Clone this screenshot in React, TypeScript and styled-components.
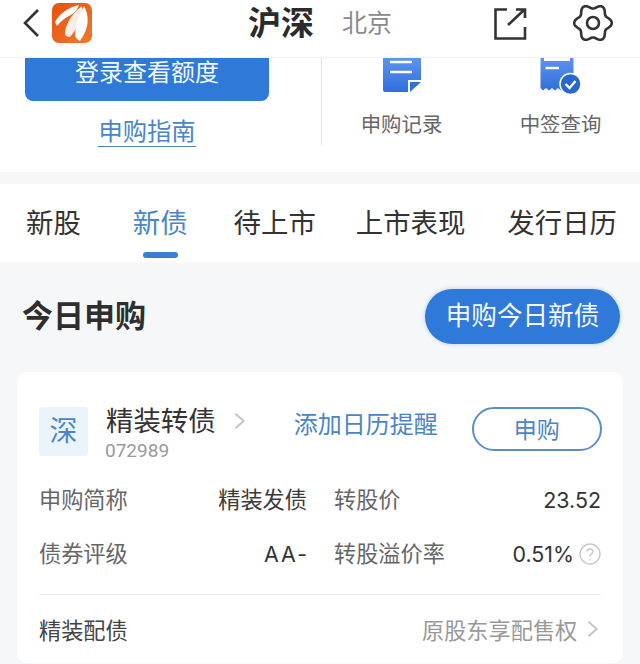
import { createGlobalStyle } from 'styled-components';
import styled from 'styled-components';

const GlobalStyle = createGlobalStyle`
  html, body {
    margin: 0;
    padding: 0;
    background: #f6f7f9;
    overflow: hidden;
  }
  body {
    font-family: "Roboto", "Noto Sans CJK SC", sans-serif;
  }
`;

// wavy six-lobed outline of the settings gear
const gearPath = () => {
  const points: string[] = [];
  for (let deg = 0; deg < 360; deg += 4) {
    const rad = (deg * Math.PI) / 180;
    const r = 16.6 + 2.2 * Math.cos(6 * rad);
    points.push(`${(20 + r * Math.cos(rad)).toFixed(2)} ${(20 + r * Math.sin(rad)).toFixed(2)}`);
  }
  return `M${points.join(' L')} Z`;
};

const Page = styled.div`
  width: 640px;
  height: 664px;
  overflow: hidden;
  display: flex;
  flex-direction: column;
`;

const Header = styled.header`
  height: 57px;
  flex: none;
  background: #fff;
  border-bottom: 1px solid #f1f1f1;
  display: flex;
  align-items: flex-start;
  padding-left: 22px;
`;

const BackIcon = styled.svg`
  width: 18px;
  height: 30px;
  margin-top: 8px;
  flex: none;
`;

const Logo = styled.svg`
  width: 40px;
  height: 40px;
  margin: 3px 0 0 12px;
  flex: none;
`;

const Title = styled.h1`
  margin: 0 0 0 156px;
  font-size: 33px;
  line-height: 48px;
  font-weight: 700;
  color: #2b2b2b;
  width: 94px;
  flex: none;
`;

const City = styled.span`
  font-size: 25px;
  line-height: 48px;
  color: #8a8a8a;
  width: 151px;
  flex: none;
`;

const ShareIcon = styled.svg`
  width: 34px;
  height: 34px;
  margin-top: 7px;
  flex: none;
`;

const GearIcon = styled.svg`
  width: 40px;
  height: 40px;
  margin: 3px 0 0 46px;
  flex: none;
`;

const Overview = styled.section`
  height: 114px;
  flex: none;
  background: #fff;
  display: flex;
`;

const LoginColumn = styled.div`
  width: 244px;
  margin-left: 25px;
  display: flex;
  flex-direction: column;
  align-items: center;
`;

const LoginButton = styled.div`
  width: 100%;
  height: 43px;
  background: #2f7ad9;
  border-radius: 0 0 8px 8px;
  color: #f4f8fd;
  font-size: 24px;
  line-height: 30px;
  text-align: center;
`;

const GuideLink = styled.a`
  margin-top: 15px;
  font-size: 24.3px;
  line-height: 32px;
  color: #4a86c5;
  border-bottom: 1px solid #4a86c5;
  height: 30px;
`;

const Divider = styled.div`
  width: 1px;
  height: 87px;
  margin-left: 52px;
  background: #e4e4e4;
`;

const Shortcut = styled.div`
  width: 159px;
  display: flex;
  flex-direction: column;
  align-items: center;
  font-size: 20.4px;
  line-height: 28px;
  color: #666;
`;

const ShortcutIcon = styled.svg`
  width: 48px;
  height: 36px;
  margin-bottom: 17px;
`;

const Gap = styled.div`
  height: 12px;
  flex: none;
  background: #f6f7f9;
`;

const Tabs = styled.nav`
  height: 78px;
  flex: none;
  background: #fff;
  display: flex;
  padding-left: 26px;
`;

const Tab = styled.div<{ $active?: boolean; $gap: number }>`
  position: relative;
  margin-right: ${(props) => props.$gap}px;
  font-size: 27.4px;
  line-height: 80px;
  color: ${(props) => (props.$active ? '#4a86c5' : '#333')};
  white-space: nowrap;

  ${(props) =>
    props.$active &&
    `
    &::after {
      content: '';
      position: absolute;
      left: 10px;
      right: 10px;
      bottom: 4px;
      height: 6px;
      border-radius: 3px;
      background: #3a7fd5;
    }
  `}
`;

const SectionHead = styled.div`
  height: 110px;
  flex: none;
  display: flex;
  align-items: center;
  justify-content: space-between;
  padding: 0 20px 1px 22px;
  box-sizing: border-box;
`;

const SectionTitle = styled.h2`
  margin: 0;
  font-size: 31px;
  line-height: 44px;
  font-weight: 700;
  color: #2e2e2e;
`;

const TodayButton = styled.div`
  width: 195px;
  height: 55px;
  border-radius: 28px;
  background: #2f7ad9;
  box-shadow: 0 0 4px rgba(47, 122, 217, 0.35);
  color: #f4f8fd;
  font-size: 25.6px;
  line-height: 55px;
  text-align: center;
`;

const Card = styled.section`
  margin: 0 17px;
  height: 291px;
  flex: none;
  box-sizing: border-box;
  background: #fff;
  border-radius: 10px;
  padding: 35px 22px 0;
`;

const CardHead = styled.div`
  display: flex;
  align-items: flex-start;
  height: 64px;
`;

const MarketBadge = styled.div`
  width: 49px;
  height: 49px;
  background: #ebf3fb;
  border-radius: 3px;
  color: #4a86c5;
  font-size: 28px;
  line-height: 49px;
  text-align: center;
  flex: none;
`;

const NameBlock = styled.div`
  margin-left: 18px;
  width: 128px;
  flex: none;
`;

const BondName = styled.div`
  font-size: 27.4px;
  line-height: 28px;
  margin-top: 1px;
  color: #333;
  white-space: nowrap;
`;

const BondCode = styled.div`
  font-size: 19px;
  line-height: 22px;
  margin: 4px 0 0 -1px;
  color: #999;
`;

const Chevron = styled.svg<{ $size: number }>`
  width: ${(props) => props.$size * 0.65}px;
  height: ${(props) => props.$size}px;
  flex: none;
`;

const NameChevron = styled(Chevron)`
  margin-top: 5px;
`;

const Reminder = styled.div`
  margin-left: 48px;
  font-size: 24px;
  line-height: 37px;
  color: #4a86c5;
  white-space: nowrap;
  width: 178px;
  flex: none;
`;

const ApplyButton = styled.div`
  width: 130px;
  height: 44px;
  box-sizing: border-box;
  border: 2px solid #5b8fc4;
  border-radius: 22px;
  color: #4a86c5;
  font-size: 23px;
  line-height: 44px;
  text-align: center;
  flex: none;
`;

const InfoGrid = styled.div`
  display: grid;
  grid-template-columns: 268px 294px;
  grid-auto-rows: 54px;
`;

const InfoCell = styled.div`
  display: flex;
  align-items: center;
  justify-content: space-between;
  font-size: 22.2px;

  &:nth-child(even) {
    padding-left: 27px;
  }
`;

const InfoLabel = styled.span`
  color: #666;
`;

const InfoValue = styled.span<{ $spacing?: number }>`
  display: inline-flex;
  align-items: center;
  gap: 5px;
  margin-top: 4px;
  margin-right: ${(props) => -(props.$spacing ?? 0)}px;
  font-family: "Inter", "Noto Sans CJK SC", sans-serif;
  font-size: 21.4px;
  letter-spacing: ${(props) => props.$spacing ?? 0}px;
  color: #333;
`;

const CjkValue = styled.span`
  font-family: "Noto Sans CJK SC", sans-serif;
  font-size: 22.2px;
  color: #3a3a3a;
`;

const HelpIcon = styled.svg`
  width: 22px;
  height: 22px;
`;

const PlacementRow = styled.div`
  margin-top: 15px;
  border-top: 1px solid #f0f0f0;
  height: 67px;
  display: flex;
  align-items: center;
  justify-content: space-between;
  font-size: 22.2px;
  color: #444;
`;

const PlacementHint = styled.span`
  display: inline-flex;
  align-items: center;
  gap: 10px;
  margin-right: 2px;
  color: #999;
`;

export default function App() {
  return (
    <Page>
      <GlobalStyle />
      <Header>
        <BackIcon viewBox="0 0 18 30">
          <path d="M16 2 L3 15 L16 28" fill="none" stroke="#333" strokeWidth="2.6" />
        </BackIcon>
        <Logo viewBox="0 0 40 40">
          <defs>
            <linearGradient id="logoOrange" x1="0" y1="0" x2="1" y2="1">
              <stop offset="0" stopColor="#e8500f" />
              <stop offset="1" stopColor="#f0792b" />
            </linearGradient>
          </defs>
          <rect width="40" height="40" rx="7" fill="url(#logoOrange)" />
          <path d="M3 19 C8 10 17 4 27 2 C25 8 21 11 17 13 C13 15 8 19 5 23 Z" fill="#fff" />
          <path d="M13 32 C12 24 19 11 30 3 C31 13 26 25 18 34 C16 34 14 33 13 32 Z" fill="#fdeee3" />
          <path d="M23 33 C23 24 27 12 32 3 C37 12 38 24 28 38 C26 37 24 35 23 33 Z" fill="#fff" />
        </Logo>
        <Title>沪深</Title>
        <City>北京</City>
        <ShareIcon viewBox="0 0 34 34">
          <path d="M14 2.5 H2.5 V31.5 H32 V20" fill="none" stroke="#333" strokeWidth="2.6" />
          <path d="M15 18 L31 3 M23 2.5 H32 V11" fill="none" stroke="#333" strokeWidth="2.6" />
        </ShareIcon>
        <GearIcon viewBox="0 0 40 40">
          <path d={gearPath()} fill="none" stroke="#333" strokeWidth="2.6" strokeLinejoin="round" />
          <circle cx="20" cy="20" r="6" fill="none" stroke="#333" strokeWidth="2.6" />
        </GearIcon>
      </Header>
      <Overview>
        <LoginColumn>
          <LoginButton>登录查看额度</LoginButton>
          <GuideLink>申购指南</GuideLink>
        </LoginColumn>
        <Divider />
        <Shortcut>
          <ShortcutIcon viewBox="0 0 48 36">
            <defs>
              <linearGradient id="docBlue" x1="0" y1="0" x2="0" y2="1">
                <stop offset="0" stopColor="#5d95ee" />
                <stop offset="1" stopColor="#2f6fdc" />
              </linearGradient>
            </defs>
            <path d="M5 0 H43 V22 H30 V34 H7 Q5 34 5 32 Z" fill="url(#docBlue)" />
            <path d="M32 24 H43 L32 34 Z" fill="#2f6fdc" />
            <path d="M12 4 H34 M12 14 H34" stroke="#fff" strokeWidth="2.4" />
          </ShortcutIcon>
          申购记录
        </Shortcut>
        <Shortcut>
          <ShortcutIcon viewBox="0 0 48 36">
            <path
              d="M3.5 0 H7 V3 H33 V0 H36.5 V30 H33 L30 32.5 L27 30 L24 32.5 L21 30 L18 32.5 L15 30 L12 32.5 L9 30 L6 32.5 L3.5 30 Z"
              fill="url(#docBlue)"
            />
            <path d="M8.5 10 H22" stroke="#fff" strokeWidth="2.4" />
            <circle cx="33.5" cy="26" r="10.5" fill="#2a66cf" stroke="#fff" strokeWidth="1.5" />
            <path d="M28.5 26 L32.5 30 L38.5 23" fill="none" stroke="#fff" strokeWidth="2.4" />
          </ShortcutIcon>
          中签查询
        </Shortcut>
      </Overview>
      <Gap />
      <Tabs>
        <Tab $gap={52}>新股</Tab>
        <Tab $gap={46} $active>新债</Tab>
        <Tab $gap={40}>待上市</Tab>
        <Tab $gap={42}>上市表现</Tab>
        <Tab $gap={0}>发行日历</Tab>
      </Tabs>
      <SectionHead>
        <SectionTitle>今日申购</SectionTitle>
        <TodayButton>申购今日新债</TodayButton>
      </SectionHead>
      <Card>
        <CardHead>
          <MarketBadge>深</MarketBadge>
          <NameBlock>
            <BondName>精装转债</BondName>
            <BondCode>072989</BondCode>
          </NameBlock>
          <NameChevron $size={18} viewBox="0 0 12 18">
            <path d="M1.5 1.5 L10 9 L1.5 16.5" fill="none" stroke="#c4c4c4" strokeWidth="2" />
          </NameChevron>
          <Reminder>添加日历提醒</Reminder>
          <ApplyButton>申购</ApplyButton>
        </CardHead>
        <InfoGrid>
          <InfoCell>
            <InfoLabel>申购简称</InfoLabel>
            <CjkValue>精装发债</CjkValue>
          </InfoCell>
          <InfoCell>
            <InfoLabel>转股价</InfoLabel>
            <InfoValue>23.52</InfoValue>
          </InfoCell>
          <InfoCell>
            <InfoLabel>债券评级</InfoLabel>
            <InfoValue $spacing={2}>AA-</InfoValue>
          </InfoCell>
          <InfoCell>
            <InfoLabel>转股溢价率</InfoLabel>
            <InfoValue>
              0.51%
              <HelpIcon viewBox="0 0 22 22">
                <circle cx="11" cy="11" r="10" fill="none" stroke="#c8c8c8" strokeWidth="1.4" />
                <path
                  d="M8 8.5 C8 5 14 5 14 8.5 C14 11 11 10.5 11 13.5 M11 16 V17.5"
                  fill="none"
                  stroke="#c8c8c8"
                  strokeWidth="1.5"
                />
              </HelpIcon>
            </InfoValue>
          </InfoCell>
        </InfoGrid>
        <PlacementRow>
          <span>精装配债</span>
          <PlacementHint>
            原股东享配售权
            <Chevron $size={18} viewBox="0 0 12 18">
              <path d="M1.5 1.5 L10 9 L1.5 16.5" fill="none" stroke="#c4c4c4" strokeWidth="2" />
            </Chevron>
          </PlacementHint>
        </PlacementRow>
      </Card>
    </Page>
  );
}
